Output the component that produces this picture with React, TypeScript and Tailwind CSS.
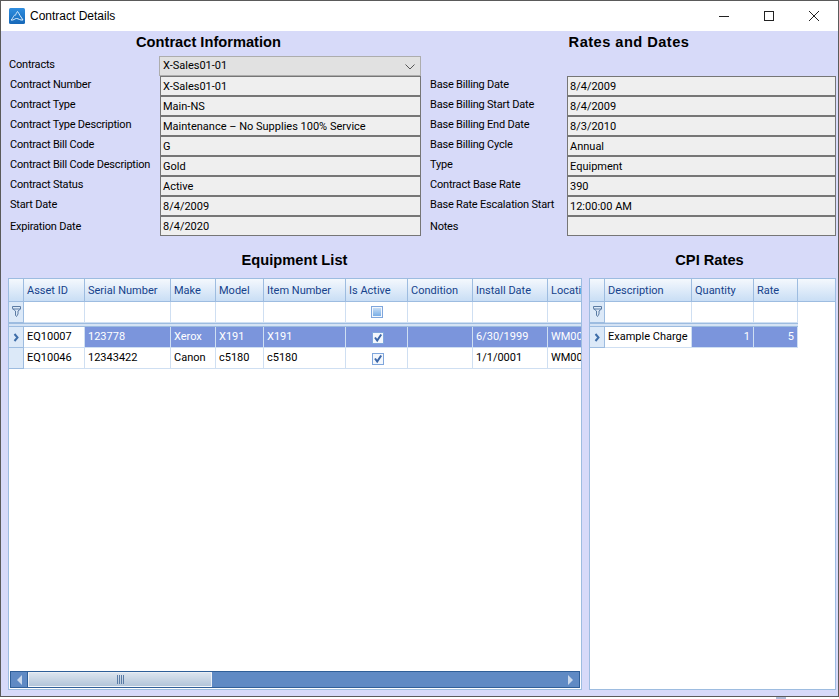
const uiFont = { fontFamily: '"Liberation Sans", Arial, sans-serif' };
const cellFont = { fontFamily: 'Roboto, "Liberation Sans", sans-serif' };

const leftFields = [
  ["Contract Number", "X-Sales01-01"],
  ["Contract Type", "Main-NS"],
  ["Contract Type Description", "Maintenance – No Supplies 100% Service"],
  ["Contract Bill Code", "G"],
  ["Contract Bill Code Description", "Gold"],
  ["Contract Status", "Active"],
  ["Start Date", "8/4/2009"],
  ["Expiration Date", "8/4/2020"],
];

const rightFields = [
  ["Base Billing Date", "8/4/2009"],
  ["Base Billing Start Date", "8/4/2009"],
  ["Base Billing End Date", "8/3/2010"],
  ["Base Billing Cycle", "Annual"],
  ["Type", "Equipment"],
  ["Contract Base Rate", "390"],
  ["Base Rate Escalation Start", "12:00:00 AM"],
  ["Notes", ""],
];

const Field = ({ label, value, labelClass, last }: { label: string; value: string; labelClass: string; last?: boolean }) => (
  <div className="flex h-5">
    <div className={`${labelClass} shrink-0 whitespace-nowrap text-[11px] tracking-[-0.2px] text-black ${last ? "leading-[21px]" : "leading-[18px]"}`}>{label}</div>
    <div className="min-w-0 flex-1 overflow-hidden whitespace-nowrap border border-[#767676] bg-[#efefef] pl-[2px] text-[11px] leading-[19px] text-black">
      {value}
    </div>
  </div>
);

const Filter = () => (
  <svg width="9" height="12" viewBox="0 0 9 12" fill="none" stroke="#5b7ba3">
    <path d="M0.5 0.5h8v2.500l-2.500 2v3l-1.500 2.500-1-1v-4.500l-3-2.500z" />
    <path d="M0.5 3h8" />
  </svg>
);

const RowArrow = () => (
  <svg width="7" height="9" viewBox="0 0 7 9" fill="none" stroke="#3f6ea8" strokeWidth="2">
    <path d="M1.500 1l3 3.500-3 3.500" />
  </svg>
);

const Check = ({ blank }: { blank?: boolean }) => (
  <div className="flex h-[12px] w-[12px] items-center justify-center border border-[#7fa6dc] bg-[#f3f7fc]">
    {blank ? (
      <div className="h-[8px] w-[8px] bg-gradient-to-b from-[#c5dcf4] to-[#79aee6]" />
    ) : (
      <svg width="10" height="10" viewBox="0 0 10 10" fill="none" stroke="#3a66a8" strokeWidth="2">
        <path d="M2 4.500l2.200 3 4-6" />
      </svg>
    )}
  </div>
);

type Col = { title: string; w: string };

const equipmentCols: Col[] = [
  { title: "Asset ID", w: "w-[61px]" },
  { title: "Serial Number", w: "w-[86px]" },
  { title: "Make", w: "w-[45px]" },
  { title: "Model", w: "w-[48px]" },
  { title: "Item Number", w: "w-[82px]" },
  { title: "Is Active", w: "w-[62px]" },
  { title: "Condition", w: "w-[65px]" },
  { title: "Install Date", w: "w-[75px]" },
  { title: "Location", w: "w-[60px]" },
];

const cpiCols: Col[] = [
  { title: "Description", w: "w-[87px]" },
  { title: "Quantity", w: "w-[62px]" },
  { title: "Rate", w: "w-[44px]" },
];

const equipmentRows = [
  ["EQ10007", "123778", "Xerox", "X191", "X191", "check", "", "6/30/1999", "WM00"],
  ["EQ10046", "12343422", "Canon", "c5180", "c5180", "check", "", "1/1/0001", "WM00"],
];

const HeaderRow = ({ cols, fill }: { cols: Col[]; fill?: boolean }) => (
  <div className="flex h-[23px] shrink-0 border-b border-[#9dbce0] bg-gradient-to-b from-[#f4f8fd] to-[#c9def5]">
    <div className="w-[15px] shrink-0 border-r border-[#9dbce0]" />
    {cols.map((c) => (
      <div
        key={c.title}
        className={`${c.w} shrink-0 overflow-hidden whitespace-nowrap border-r border-[#9dbce0] pl-[3px] text-[11px] leading-[23px] text-[#15428b]`}
      >
        {c.title}
      </div>
    ))}
    {fill && <div className="flex-1" />}
  </div>
);

const FilterRow = ({ cols, activeCol }: { cols: Col[]; activeCol?: number }) => (
  <div className="flex h-[21px] shrink-0">
    <div className="flex w-[15px] shrink-0 items-center justify-center border-r border-b border-[#9dbce0] bg-[#dce9f8]">
      <Filter />
    </div>
    {cols.map((c, i) => (
      <div key={c.title} className={`${c.w} flex shrink-0 items-center justify-center border-r border-b border-[#cfdff2]`}>
        {activeCol === i && <Check blank />}
      </div>
    ))}
  </div>
);

const Spacer = ({ w }: { w: string }) => (
  <div className={`${w} h-[4px] shrink-0 border-y border-[#9dbce0] bg-[#d5e3f4]`} />
);

export default function App() {
  return (
    <div style={uiFont} className="h-[699px] w-[839px] overflow-hidden bg-white">
      <div className="flex h-[697px] flex-col border border-[#5a5a5a] bg-[#d7daf9] pr-[2px]">
        <div className="-mr-[2px] flex h-[30px] shrink-0 items-center bg-white pl-[8px]">
          <svg width="16" height="16" viewBox="0 0 16 16">
            <defs>
              <linearGradient id="ico" x1="0" y1="0" x2="0" y2="1">
                <stop offset="0" stopColor="#2f8ee0" />
                <stop offset="1" stopColor="#1668b8" />
              </linearGradient>
            </defs>
            <rect width="16" height="16" rx="1.500" fill="url(#ico)" />
            <path d="M2 12c1-.5 1.500-2 2.500-3.500S5.500 7 6 7.500 7 5 8.500 3.500c1 1 1.500 2.500 2.500 4s2 3 3 4.500c-3 .5-4.500-1.500-6.500-1.500S5 12.500 2 12z" fill="none" stroke="#dff0ff" strokeWidth="1" />
          </svg>
          <span className="ml-[5px] text-[12px] text-black">Contract Details</span>
          <div className="ml-auto flex items-center gap-[35px] pr-[19px]">
            <svg width="10" height="10" viewBox="0 0 10 10" stroke="#222">
              <path d="M0 5.500h10" />
            </svg>
            <svg width="10" height="10" viewBox="0 0 10 10" fill="none" stroke="#222">
              <rect x="0.5" y="0.5" width="9" height="9" />
            </svg>
            <svg width="10" height="10" viewBox="0 0 10 10" stroke="#222">
              <path d="M0 0l10 10M10 0L0 10" />
            </svg>
          </div>
        </div>

        <div style={cellFont} className="flex">
          <div className="w-[420px] shrink-0">
            <h2 style={uiFont} className="h-[25px] pr-[5px] text-center text-[14.67px] font-bold leading-[23px] text-black">Contract Information</h2>
            <div className="flex h-5 items-start">
              <div className="w-[158px] shrink-0 pl-[8px] text-[11px] leading-[18px] tracking-[-0.2px] text-black">Contracts</div>
              <div className="flex h-[20px] flex-1 items-center justify-between border border-[#adadad] bg-[#e1e1e1] pl-[3px] pr-[5px] pt-[1px] text-[11px]">
                X-Sales01-01
                <svg width="10" height="6" viewBox="0 0 10 6" fill="none" stroke="#555">
                  <path d="M0.500 0.500L5 5l4.500-4.500" />
                </svg>
              </div>
            </div>
            {leftFields.map(([l, v], i) => (
              <Field key={l} label={l} value={v} labelClass="w-[159px] pl-[9px]" last={i === leftFields.length - 1} />
            ))}
          </div>
          <div className="ml-[9px] flex-1">
            <h2 style={uiFont} className="h-[45px] pr-[8px] text-center text-[14.67px] font-bold leading-[23px] tracking-[0.45px] text-black">Rates and Dates</h2>
            {rightFields.map(([l, v], i) => (
              <Field key={l} label={l} value={v} labelClass="w-[137px]" last={i === rightFields.length - 1} />
            ))}
          </div>
        </div>

        <div className="flex h-[42px] shrink-0">
          <h2 className="w-[587px] pt-[14px] text-center text-[14.67px] font-bold leading-[20px] text-black">Equipment List</h2>
          <h2 className="flex-1 pr-[5px] pt-[14px] text-center text-[14.67px] font-bold leading-[20px] text-black">CPI Rates</h2>
        </div>

        <div style={cellFont} className="flex flex-1 gap-[7px] pb-[6px] pl-[7px]">
          <div className="flex w-[574px] shrink-0 flex-col overflow-hidden border border-[#9dbce0] bg-white">
            <HeaderRow cols={equipmentCols} />
            <FilterRow cols={equipmentCols} activeCol={5} />
            <Spacer w="w-full" />
            {equipmentRows.map((row, ri) => (
              <div key={row[0]} className="flex h-[21px] shrink-0">
                <div className="flex w-[15px] shrink-0 items-center justify-center border-r border-b border-[#9dbce0] bg-[#dce9f8]">
                  {ri === 0 && <RowArrow />}
                </div>
                {row.map((cell, ci) => (
                  <div
                    key={ci}
                    className={`${equipmentCols[ci].w} flex shrink-0 items-center overflow-hidden whitespace-nowrap border-r border-b border-[#cfdff2] pl-[3px] pt-[1px] text-[11px] ${
                      ri === 0 && ci > 0 ? "bg-[#7b95dc] text-white" : "text-black"
                    } ${cell === "check" ? "justify-center pl-0" : ""}`}
                  >
                    {cell === "check" ? <Check /> : cell}
                  </div>
                ))}
              </div>
            ))}
            <div className="flex-1" />
            <div className="mx-[1px] mb-[1px] flex h-[17px] shrink-0 border border-[#2f5f98] bg-[#5f8ac4]">
              <div className="flex w-[17px] items-center justify-center border-r border-[#2f5f98]">
                <div className="h-0 w-0 border-y-[5px] border-r-[5px] border-y-transparent border-r-[#c9d8ec]" />
              </div>
              <div className="flex w-[184px] items-center justify-center border border-white/70 bg-gradient-to-b from-[#dbe4ee] to-[#b3c5da]">
                <div className="flex gap-[1px]">
                  <div className="h-[9px] w-[1px] bg-[#5a7ba5]" />
                  <div className="h-[9px] w-[1px] bg-[#5a7ba5]" />
                  <div className="h-[9px] w-[1px] bg-[#5a7ba5]" />
                  <div className="h-[9px] w-[1px] bg-[#5a7ba5]" />
                </div>
              </div>
              <div className="flex-1" />
              <div className="flex w-[17px] items-center justify-center">
                <div className="h-0 w-0 border-y-[5px] border-l-[5px] border-y-transparent border-l-[#c9d8ec]" />
              </div>
            </div>
          </div>

          <div className="flex w-[247px] shrink-0 flex-col border border-[#9dbce0] bg-white">
            <HeaderRow cols={cpiCols} fill />
            <FilterRow cols={cpiCols} />
            <Spacer w="w-[208px]" />
            <div className="flex h-[21px] shrink-0">
              <div className="flex w-[15px] shrink-0 items-center justify-center border-r border-b border-[#9dbce0] bg-[#dce9f8]">
                <RowArrow />
              </div>
              <div className="flex w-[87px] shrink-0 items-center overflow-hidden whitespace-nowrap border-r border-b border-[#cfdff2] pl-[3px] pt-[1px] text-[11px] text-black">
                Example Charge
              </div>
              <div className="flex w-[62px] shrink-0 items-center justify-end border-r border-b border-[#cfdff2] bg-[#7b95dc] pr-[3px] pt-[1px] text-[11px] text-white">
                1
              </div>
              <div className="flex w-[44px] shrink-0 items-center justify-end border-r border-b border-[#cfdff2] bg-[#7b95dc] pr-[3px] pt-[1px] text-[11px] text-white">
                5
              </div>
            </div>
          </div>
        </div>
      </div>
      <div className="ml-[776px] h-[2px] w-[10px] bg-[#aeb9d6]" />
    </div>
  );
}
